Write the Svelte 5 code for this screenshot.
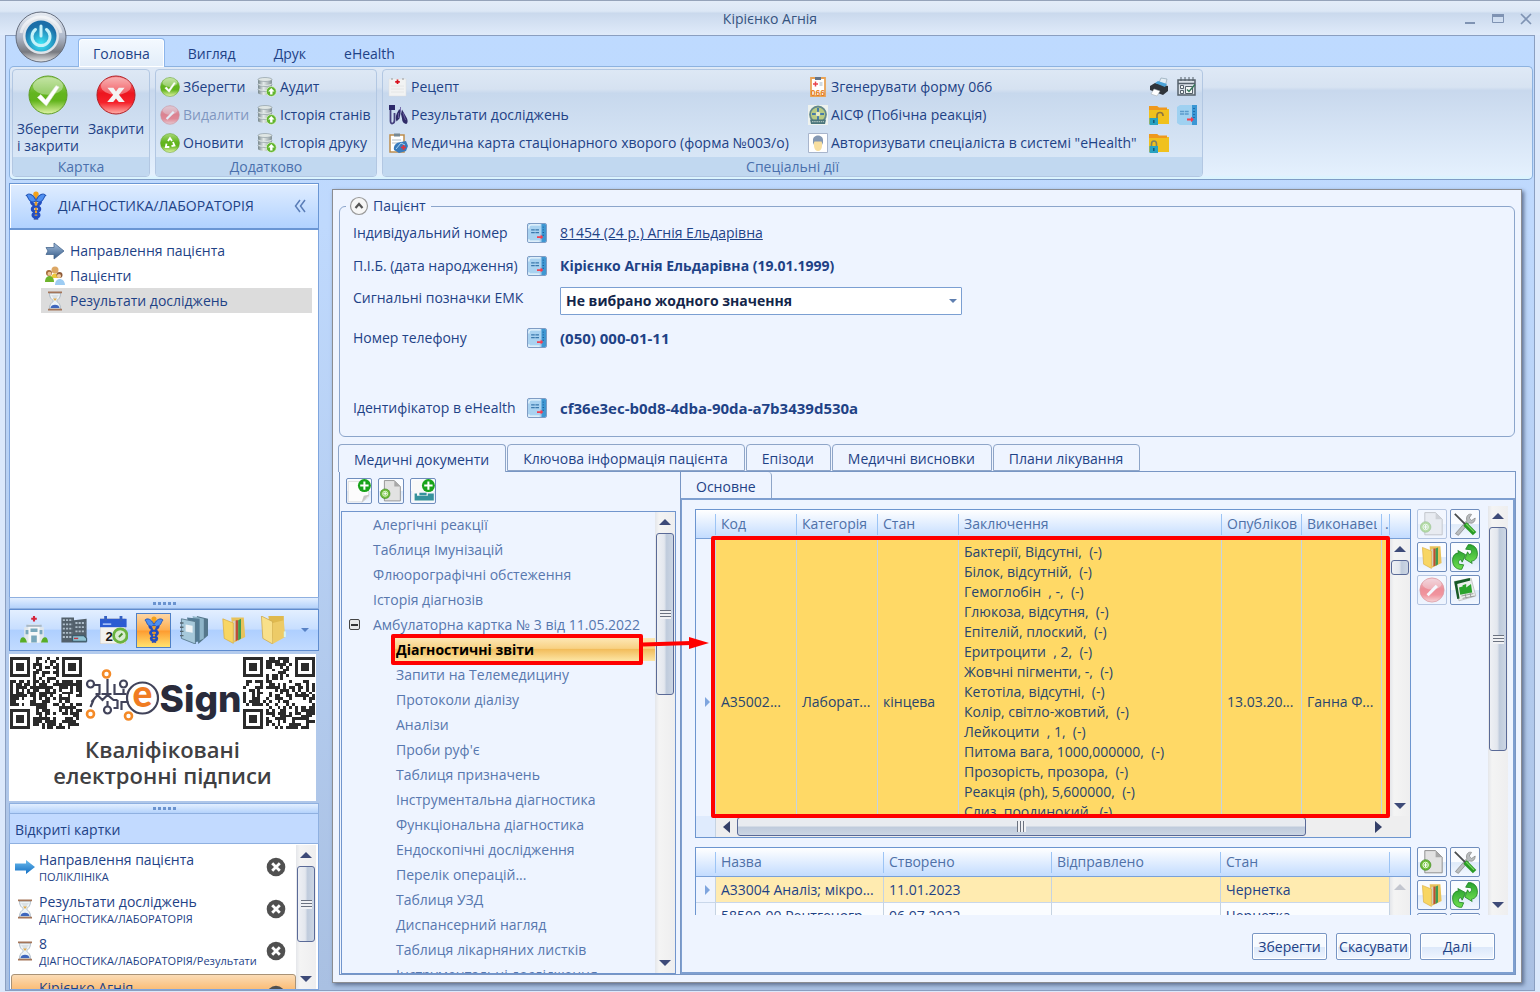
<script lang="ts">
  const tabs = ['Головна', 'Вигляд', 'Друк', 'eHealth'];
  const extra = [
    ['check', 'Зберегти'], ['db', 'Аудит'],
    ['deny', 'Видалити'], ['db', 'Історія станів'],
    ['recycle', 'Оновити'], ['db', 'Історія друку']
  ];
  const special = [
    ['recipe', 'Рецепт'], ['form', 'Згенерувати форму 066'], ['printer', ''], ['schedule', ''],
    ['lungs', 'Результати досліджень'], ['emblem', 'АІСФ (Побічна реакція)'], ['unlock', ''], ['card', ''],
    ['medcard', 'Медична карта стаціонарного хворого (форма №003/о)'], ['person', 'Авторизувати спеціаліста в системі "eHealth"'], ['lock', '']
  ];
  const nav = [['arrow', 'Направлення пацієнта'], ['people', 'Пацієнти'], ['hourglass', 'Результати досліджень']];
  const modules = ['hospital', 'building', 'calendar', 'caduceus', 'books', 'files', 'folder'];
  const cards = [
    ['bluearrow', 'Направлення пацієнта', 'ПОЛІКЛІНІКА'],
    ['hourglass', 'Результати досліджень', 'ДІАГНОСТИКА/ЛАБОРАТОРІЯ'],
    ['hourglass', '8', 'ДІАГНОСТИКА/ЛАБОРАТОРІЯ/Результати досліджень'],
    ['', 'Кірієнко Агнія', '']
  ];
  const docTabs = ['Медичні документи', 'Ключова інформація пацієнта', 'Епізоди', 'Медичні висновки', 'Плани лікування'];
  const rootItems = ['Алергічні реакції', 'Таблиця Імунізацій', 'Флюорографічні обстеження', 'Історія діагнозів'];
  const childItems = ['Діагностичні звіти', 'Запити на Телемедицину', 'Протоколи діалізу', 'Аналізи', "Проби руф'є", 'Таблиця призначень', 'Інструментальна діагностика', 'Функціональна діагностика', 'Ендоскопічні дослідження', 'Перелік операцій...', 'Таблиця УЗД', 'Диспансерний нагляд', 'Таблиця лікарняних листків', 'Інструментальні дослідження'];
  const resultCols = ['', 'Код', 'Категорія', 'Стан', 'Заключення', 'Опубліковано', 'Виконавець', '.'];
  const draftCols = ['', 'Назва', 'Створено', 'Відправлено', 'Стан'];
  const findings = ['Бактерії, Відсутні,  (-)', 'Білок, відсутній,  (-)', 'Гемоглобін  , -,  (-)', 'Глюкоза, відсутня,  (-)', 'Епітелій, плоский,  (-)', 'Еритроцити  , 2,  (-)', 'Жовчні пігменти, -,  (-)', 'Кетотіла, відсутні,  (-)', 'Колір, світло-жовтий,  (-)', 'Лейкоцити  , 1,  (-)', 'Питома вага, 1000,000000,  (-)', 'Прозорість, прозора,  (-)', 'Реакція (ph), 5,600000,  (-)', 'Слиз, поодинокий,  (-)'];

  function qr(seed: number) {
    const n = 25;
    let d = '';
    let s = seed;
    const inside = (x: number, y: number) => (x < 8 && y < 8) || (x > n - 9 && y < 8) || (x < 8 && y > n - 9);
    for (let y = 0; y < n; y++) for (let x = 0; x < n; x++) {
      s = (s * 1103515245 + 12345) % 2147483648;
      if (!inside(x, y) && (s >> 12) % 100 < 55) d += `M${x} ${y}h1v1h-1z`;
    }
    for (const [x, y] of [[0, 0], [n - 7, 0], [0, n - 7]]) {
      d += `M${x} ${y}h7v7h-7zM${x + 1} ${y + 1}v5h5v-5zM${x + 2} ${y + 2}h3v3h-3z`;
    }
    return d;
  }
</script>

{#snippet icon(name: string, size: number = 20)}
  <svg class="ico" width={size} height={size} viewBox="0 0 20 20" aria-hidden="true">
    {#if name === 'check'}
      <circle cx="10" cy="10" r="9.5" fill="url(#gGreen)" stroke="#5d9c25" stroke-width=".5" />
      <ellipse cx="10" cy="5.5" rx="7.5" ry="4.4" fill="#fff" opacity=".35" />
      <path d="M4.7 11.2 6.4 9.8 8.8 12.4 14 5.3 15.6 6 9.2 15.5Z" fill="#fff" stroke="#d9e6cc" stroke-width=".3" />
    {:else if name === 'cross'}
      <circle cx="10" cy="10" r="9.5" fill="url(#gRed)" stroke="#b11c22" stroke-width=".5" />
      <ellipse cx="10" cy="5.5" rx="7.5" ry="4.4" fill="#fff" opacity=".35" />
      <path d="M5.7 6.4h3L10 8.2l1.4-1.8h2.9l-2.8 3.5 2.9 3.6h-3L10 11.7l-1.4 1.8H5.6l3-3.6Z" fill="#f3f3f3" />
    {:else if name === 'deny'}
      <circle cx="10" cy="10" r="9.3" fill="url(#gRed)" stroke="#c73137" stroke-width=".6" />
      <ellipse cx="10" cy="5.5" rx="7.3" ry="4.2" fill="#fff" opacity=".35" />
      <path d="M5.8 13.2 12.9 6l1.7 1.6-7.2 7.2Z" fill="#fff" />
    {:else if name === 'recycle'}
      <circle cx="10" cy="10" r="9.5" fill="url(#gGreen)" stroke="#5d9c25" stroke-width=".5" />
      <path d="M8 8 10 5l2 3M13 9l1.500 3.500-3 .5M9.300 14H5.800L6.500 10.600" fill="none" stroke="#fff" stroke-width="1.800" />
    {:else if name === 'db'}
      {#each [12.5, 7.5, 2.5] as y}
        <path d="M1 {y}v3.300c0 1.300 3 2.200 7 2.200s7-.9 7-2.200V{y}Z" fill="url(#gSteel)" />
        <ellipse cx="8" cy={y} rx="7" ry="2" fill="#dfe6e4" stroke="#84949a" stroke-width=".6" />
      {/each}
      <circle cx="14.300" cy="14.500" r="5" fill="#62b52e" stroke="#e9f5df" stroke-width=".7" />
      <path d="M14.300 11l3.200 3.400h-2v3h-2.400v-3h-2Z" fill="#fff" />
    {:else if name === 'recipe'}
      <path d="M1 2h17v17H1z" fill="#f2f3f3" stroke="#dedede" stroke-width=".5" />
      <path d="M3 9h13M3 12h13M3 15h13" stroke="#e2e2e2" stroke-width=".8" />
      <path d="M4 1v2M15 1v2" stroke="#999" />
      <path d="M9.500 2.500v4.500M7.200 4.800h4.600" stroke="#d8101c" stroke-width="1.700" />
    {:else if name === 'lungs'}
      <path d="M1 0h6v5H1z" fill="#2d2a6a" />
      <path d="M2.500 5v11c0 4 4 3 4-1V8" fill="none" stroke="#46417f" stroke-width="1.800" />
      <path d="M11 4.500 9 8c-1.500 3-1.500 6-.5 8.500l3-3 1-5v-4ZM14 4.500l4.500 8c2 3.500 1 6.500-.5 6.500-2.500-.5-4-2.500-4-5.500l-1-4.500Z" fill="#302c68" />
      <path d="M12.500 2v5m2.500 1 2.500 7M10.500 8v5" stroke="#6c61a5" stroke-width=".9" />
    {:else if name === 'medcard'}
      <path d="M2 2h14v17H2z" fill="#fff" stroke="#bd8d4d" stroke-width="1.500" />
      <path d="M6 .5h6v3H6z" fill="#778892" /><path d="M4 7h9M4 10h6" stroke="#b3bdc5" />
      <path d="M6 17c-1-5 3-8 7-8l5-1 2 5-2 5-7 2Z" fill="#397abb" />
      <path d="m8 16 5-6 4 2" fill="none" stroke="#a8d4f4" /><path d="M15.500 12v5M13 14.500h5" stroke="#e2333d" stroke-width="1.700" />
    {:else if name === 'form'}
      <path d="M3 1h14v18H3z" fill="#fff" stroke="#e9a356" stroke-width="1.800" />
      <path d="M7 0h6v3H7z" fill="#64758a" /><path d="M7.500 4.500v5M5 7h5" stroke="#e9434e" stroke-width="1.500" />
      <path d="M11.500 6h3M11.500 8h3" stroke="#9fb3c4" />
      <text x="2.700" y="18.500" font-size="8.500" font-weight="700" fill="#e47d20" font-family="Liberation Sans">066</text>
    {:else if name === 'emblem'}
      <path d="M0 0h20v20H0z" fill="#eef2ee" />
      <circle cx="10" cy="9.500" r="8" fill="#b9cb84" stroke="#64898c" stroke-width="1.800" />
      <path d="M10 3v12M4 9h12" stroke="#467aa8" stroke-width="2" /><circle cx="10" cy="9" r="2.300" fill="#e9ebc6" />
      <path d="M2 14.500h16l-1 4.500H3Z" fill="#4b757c" /><path d="M4 16.700h12" stroke="#bed1cb" stroke-dasharray="1.500 .7" />
    {:else if name === 'person'}
      <path d="M.5.5h19v19H.5z" fill="#fff" stroke="#a8b5cc" />
      <path d="M6 8h8v5c0 3-2 5-4 5s-4-2-4-5Z" fill="#f8dfa0" /><path d="M5 12V7c0-6 10-6 10 0v5l-1.500-3.500h-7Z" fill="#8498b3" />
    {:else if name === 'printer'}
      <path d="m9 8 3-7 6 1-2 8Z" fill="#e4eef5" stroke="#8298a8" stroke-width=".6" />
      <path d="m1 9 5-3 13 3v5l-5 4-13-5Z" fill="#2f343a" /><path d="m6 6 3-2 9 3-2 3Z" fill="#4ca3d8" />
      <path d="m5 12 6 2-3 5-6-2Z" fill="#fff" stroke="#a1a8ad" stroke-width=".5" />
    {:else if name === 'schedule'}
      <path d="M1 3h17v15H1z" fill="#dbe2e8" stroke="#55616b" stroke-width="1.500" /><path d="M1 6.500h17" stroke="#55616b" stroke-width="1.500" />
      <path d="M4 0v4M8 0v4M12 0v4M16 0v4" stroke="#55616b" />
      <path d="M3.500 8.500h3v3h-3zM3.500 13.500h3v3h-3zM8.500 9.500h7v7h-7z" fill="#f3f7f5" stroke="#55616b" />
      <path d="m10 12.500 2 2 6-7" stroke="#347657" fill="none" stroke-width="1.400" />
    {:else if name === 'unlock' || name === 'lock'}
      <path d="M0 1h8l2 3h10v15H0z" fill="#f0c11d" /><path d="M0 1h8l2 1.500h8V5H0z" fill="#ef991d" />
      {#if name === 'unlock'}
        <path d="M8 13V10.500c0-4 6-4 6 0v.5" fill="none" stroke="#8c7542" stroke-width="1.700" />
      {:else}
        <path d="M2.500 14v-3c0-4 5-4 5 0v3" fill="none" stroke="#7e8362" stroke-width="1.600" />
      {/if}
      <path d="M.500 13h8.500v7H.5z" fill="#28a3c2" /><path d="M4.800 15v3" stroke="#145a76" stroke-width="1.500" />
    {:else if name === 'card'}
      <path d="M0 2 3 0h17v20H3l-3-2Z" fill="#9fd1f1" /><path d="M15 0h5v20h-5z" fill="#3b97d4" />
      <path d="M3 6.500h9M3 9h9" stroke="#5b9bcb" stroke-width="1.300" stroke-dasharray="4 .7" /><path d="M17 3v12" stroke="#195e9c" stroke-dasharray="1 2" stroke-width="1.500" />
      <path d="M10 13.500h4v-1.700l3 2.700-3 2.700v-1.700h-4Z" fill="#f33f50" />
    {:else if name === 'cardbtn'}
      <path d="M0 0h20v20H0z" fill="#a9d2f0" /><path d="M15 0h5v20h-5z" fill="#3f97d2" /><path d="M1 5V2.500L3 1h11M1 17v2h12" fill="none" stroke="#eef7fd" stroke-width="1.300" />
      <path d="M3.500 6.500h9M3.500 9.500h9" stroke="#3a78ac" stroke-width="1.300" stroke-dasharray="4 .7" /><path d="M17 3v12" stroke="#1d5c94" stroke-dasharray="1 2" stroke-width="1.500" />
      <path d="M10 13.500h4v-1.700l3 2.700-3 2.700v-1.700h-4Z" fill="#f33f50" />
    {:else if name === 'caduceus'}
      <path d="M10 1v18" stroke="#e59822" stroke-width="1.600" /><circle cx="10" cy="2.200" r="1.800" fill="#f2a11b" />
      <path d="M9.500 5.500C8.500 2.500 5 1 3.500 3c1.500.5 1 4 4.500 4.500l2-1 2 1C15.500 7 15 3.500 16.500 3 15 1 11.500 2.500 10.500 5.500Z" fill="#4f8ff0" stroke="#1f53b7" stroke-width=".7" />
      <path d="M7 7c-.5 3 5.500 2.500 5.500 5s-4.500 2-4.500 4 3 1 2.500 3M13 7c.5 3-5.500 2.500-5.500 5s4.500 2 4.500 4-3 1-2.500 3" fill="none" stroke="#224dc0" stroke-width="2" />
      <circle cx="10" cy="9" r=".9" fill="#f0a32a" /><circle cx="10" cy="14" r=".8" fill="#f0a32a" />
    {:else if name === 'arrow'}
      <path d="M1 6.500h8V2l10 8-10 8v-4.500H1l2-3.500Z" fill="url(#gArrow)" stroke="#48688f" stroke-width=".8" />
    {:else if name === 'bluearrow'}
      <path d="M0 6.500h11V3l9 7-9 7v-3.500H0Z" fill="url(#gBlue)" />
    {:else if name === 'people'}
      <circle cx="10" cy="4" r="3.500" fill="#dca765" /><path d="M6 12c0-6 8-6 8 0Z" fill="#edc83c" />
      <circle cx="4" cy="7" r="3" fill="#a66c3b" /><circle cx="4.500" cy="7.800" r="2" fill="#eec493" /><path d="M0 16c0-8 9-8 9 0Z" fill="#6eb42c" />
      <circle cx="14.500" cy="9" r="3" fill="#8d5a38" /><circle cx="14" cy="10" r="2.100" fill="#f0c89b" /><path d="M10 19c0-8 9.500-8 10 0Z" fill="#9dccf3" />
    {:else if name === 'hourglass'}
      <path d="M4.500 2h11c0 5-2 6-4 8 2 2 4 3 4 8h-11c0-5 2-6 4-8-2-2-4-3-4-8Z" fill="#edf3f7" stroke="#9eafbd" stroke-width=".8" />
      <path d="M6 4h8l-4 5Z" fill="#dbe1e4" /><path d="M8 7.500h4l-2 2.500Z" fill="#e0ac4f" /><path d="M5.500 17c0-4.500 9-4.500 9 0Z" fill="#3e66bd" />
      <path d="M3 1.300h14M3 18.700h14" stroke="#a47559" stroke-width="1.800" />
    {:else if name === 'hospital'}
      <path d="M3 8h14v11H3z" fill="#dfe6eb" /><path d="M6 6h8v13H6z" fill="#f5f7f8" /><path d="M4.500 7h11" stroke="#a9b9c6" stroke-width="1.500" />
      <path d="M10 0v4M8 2h4" stroke="#d5253b" stroke-width="1.500" /><path d="M4 10h2v3H4zM7.500 9h5v2.500h-5zM14 10h2v3h-2zM8 14h4v5H8z" fill="#78a7bb" />
      <path d="M0 19c0-5 4-5 5 0ZM15 19c1-5 5-5 5 0Z" fill="#58ad27" />
    {:else if name === 'building'}
      <path d="M1 1h9v18H1zM10 3l9-1v17h-9z" fill="#53606b" /><path d="M2 3h7M2 6h7M2 9h7M2 12h7M2 15h7M11 5h7M11 8h7M11 11h7" stroke="#aebdc9" stroke-width="1.300" stroke-dasharray="1.500 .8" />
      <path d="M9 14h8l2 2v2H9z" fill="#8fc3d4" stroke="#3d5b6b" stroke-width=".8" /><path d="M10 16h3" stroke="#bd3943" />
    {:else if name === 'calendar'}
      <path d="M0 2h18v18H0z" fill="#f3f2ee" stroke="#bdc0c5" stroke-width=".6" /><path d="M0 2h19v6H0z" fill="#2b5bd2" />
      <path d="M4 0v4M15 0v4" stroke="#345fc2" stroke-width="2" /><path d="M2 5.800h6" stroke="#bed2ff" />
      <text x="4" y="17.500" font-size="9.500" font-weight="700" fill="#191919" font-family="Liberation Sans">2</text>
      <circle cx="14.500" cy="14" r="4.800" fill="#d9ecd0" stroke="#6ab33e" stroke-width="2" /><path d="m13.500 15 2.500-2.500" stroke="#4a902a" stroke-width="1.300" />
    {:else if name === 'books'}
      <path d="m12 0 8 2v12l-7 6Z" fill="#55778b" /><path d="m9 0 8 2v14l-6 3Z" fill="#8fb5c8" /><path d="m5 1 9 1v16l-5 1Z" fill="#537b94" /><path d="m1 2 10 2v16L1 16Z" fill="#a6c8da" stroke="#527388" stroke-width=".6" />
      <path d="m4 6 5 1v5l-5-1Z" fill="#eef4f7" /><path d="M0 5h2.500M0 8h2.500M0 11h2.500M0 14h2.500" stroke="#56666f" />
    {:else if name === 'files'}
      <path d="m8 1 9 0 1 14-8 4Z" fill="#e8c25a" /><path d="m9 4 2.200-1v14L9 18z" fill="#d7cfb9" /><path d="m11.200 3 1.800 0v14l-1.800 1z" fill="#bd4d38" /><path d="m13 3 2-1v14l-2 1.500z" fill="#3f9b52" /><path d="m2 2 7.500 3v14.500L3 16Z" fill="#f8d663" stroke="#d8aa3c" stroke-width=".5" />
    {:else if name === 'folder'}
      <path d="M6 0h11v14l-9 2Z" fill="#dfb94e" /><path d="m1 0 8 4v16l-7-4Z" fill="#f8e08a" stroke="#c9a445" stroke-width=".5" /><path d="m9 5 8-2 1 12-9 5Z" fill="#edcb67" /><path d="M17 11h1.500v4H17z" fill="#d8f3ed" />
    {:else if name === 'closegray'}
      <circle cx="10" cy="10" r="9.300" fill="#505050" /><path d="m6.200 6.200 7.600 7.600m0-7.600-7.600 7.600" stroke="#fff" stroke-width="2.800" />
    {:else if name === 'newdoc'}
      <path d="M1 2h17v13l-5 4H1z" fill="#fcfcfc" stroke="#d3d3d3" stroke-width=".6" /><path d="m12 20 2-6 5-1Z" fill="#c5c5c5" />
      <circle cx="14.500" cy="5.500" r="5.400" fill="#18a31a" /><path d="M14.500 2v7M11 5.500h7" stroke="#fff" stroke-width="1.700" />
    {:else if name === 'bed'}
      <path d="M1 1h18v18H1z" fill="#f8f8f8" /><path d="M3 12h2v2h14v4H3Zm4-.5h6v2H7Zm7 .5h5v2h-5Z" fill="#36929c" />
      <circle cx="14.500" cy="5.500" r="5.400" fill="#18a31a" /><path d="M14.500 2v7M11 5.500h7" stroke="#fff" stroke-width="1.700" />
    {:else if name === 'addpage'}
      <path d="M4 .5h9l5.500 5.500v13H4z" fill="#e2e2e2" stroke="#8e8e8e" stroke-width=".8" /><path d="M13 .500v5.500h5.500Z" fill="#a8a8a8" />
      <circle cx="4.700" cy="12.500" r="4.400" fill="#6fbd3a" stroke="#368118" stroke-width=".5" /><circle cx="4.700" cy="12.500" r="2.300" fill="none" stroke="#edffe1" stroke-width=".8" /><path d="M4.700 10.800v3.400M3 12.500h3.400" stroke="#fff" />
    {:else if name === 'tools'}
      <path d="m2 18 9.500-11c-1-3 1-6 4-5l-2 3 2 2 3-2c0 4-3 5-5 4L4.500 19.500Z" fill="#b9bdbf" stroke="#777" stroke-width=".5" />
      <path d="m1.500 1.500 9 9" stroke="#484c4d" stroke-width="1.500" /><path d="m10 10 8 8" stroke="#299b25" stroke-width="4" /><path d="m11 10 6.500 6.500" stroke="#77d560" />
    {:else if name === 'refresh'}
      <path d="M.8 15C-.5 10 2 7 5 6.800L4.500 5 10.500 8.200 7.800 14 7 12c-2 .3-2.600 2-1.400 3.600L9 16l-1.500 3.500C4.500 19.800 1.600 18 .8 15Z" fill="url(#gRefresh)" stroke="#1b7e20" stroke-width=".6" />
      <path d="M19.200 5C20.500 10 18 13 15 13.200l.5 1.800L9.800 11.500 12 6l1 2c2-.3 2.600-2 1.400-3.600L10.500 4 12.500.5C15.500.2 18.400 2 19.200 5Z" fill="url(#gRefresh)" stroke="#1b7e20" stroke-width=".6" />
    {:else if name === 'chart'}
      <path d="m1 3 14-3 4 15-14 4Z" fill="#ecefed" stroke="#aaa" stroke-width=".5" /><path d="m1 3 13-3 .5 2-11 3 2 12-2 .5Z" fill="#175a26" />
      <path d="m5 8 3-1v-1l3-1v3l4-3 1 7-10 2Z" fill="#2aa42c" /><path d="m7 15 10-2M8 17l10-2M10 13l1 4M14 12l1 4" stroke="#8c918d" stroke-width=".7" />
    {/if}
  </svg>
{/snippet}

{#snippet vbar(thumb: string)}
  <div class="vbar" aria-hidden="true">
    <i class="up"></i>
    <div class="track"><div class="thumb {thumb}"><b></b></div></div>
    <i class="down"></i>
  </div>
{/snippet}

{#snippet toolset(first: boolean)}
  <div class="toolset">
    <button class="sq" class:off={first} disabled={first} aria-label="Додати">{@render icon('addpage', 24)}</button>
    <button class="sq" aria-label="Налаштувати">{@render icon('tools', 24)}</button>
    <button class="sq" aria-label="Відкрити">{@render icon('files', 24)}</button>
    <button class="sq" aria-label="Оновити">{@render icon('refresh', 26)}</button>
    <button class="sq" class:off={first} disabled={first} aria-label="Видалити">{@render icon('deny', 26)}</button>
    <button class="sq" aria-label="Звіт">{@render icon('chart', 24)}</button>
  </div>
{/snippet}

<svg class="defs" aria-hidden="true">
  <defs>
    <linearGradient id="gGreen" x2="0" y2="1"><stop stop-color="#a8d878" /><stop offset=".45" stop-color="#63b51f" /><stop offset=".65" stop-color="#62b41d" /><stop offset="1" stop-color="#e3f5a8" /></linearGradient>
    <linearGradient id="gRed" x2="0" y2="1"><stop stop-color="#f58e90" /><stop offset=".45" stop-color="#ec151e" /><stop offset=".7" stop-color="#f5222b" /><stop offset="1" stop-color="#ffb4ad" /></linearGradient>
    <linearGradient id="gSteel"><stop stop-color="#77878b" /><stop offset=".4" stop-color="#e4eae9" /><stop offset="1" stop-color="#839195" /></linearGradient>
    <linearGradient id="gArrow" x2="0" y2="1"><stop stop-color="#a5bfdd" /><stop offset="1" stop-color="#335986" /></linearGradient>
    <linearGradient id="gBlue" x2="0" y2="1"><stop stop-color="#6cbbec" /><stop offset="1" stop-color="#126fc4" /></linearGradient>
    <linearGradient id="gRefresh" x2="0" y2="1"><stop stop-color="#2aa331" /><stop offset="1" stop-color="#6fdf50" /></linearGradient>
    <linearGradient id="gOrb" x2="0" y2="1"><stop stop-color="#e8edf4" /><stop offset=".5" stop-color="#aeb8ca" /><stop offset=".8" stop-color="#77797f" /><stop offset="1" stop-color="#e9eaec" /></linearGradient>
    <radialGradient id="gCore" cy=".75" r=".6"><stop stop-color="#3ce8f8" /><stop offset="1" stop-color="#1b6ea8" /></radialGradient>
  </defs>
</svg>

<div class="window">
  <header class="title">
    <h1>Кірієнко Агнія</h1>
    <div class="winbtns">
      <button aria-label="Згорнути"><svg width="12" height="12"><path d="M1 10h10" stroke="#7f93b3" stroke-width="2" /></svg></button>
      <button aria-label="Розгорнути"><svg width="12" height="12"><path d="M.5 1.500h11v8H.5z" fill="none" stroke="#7f93b3" /><path d="M0 2.500h12" stroke="#7f93b3" stroke-width="3" /></svg></button>
      <button aria-label="Закрити вікно"><svg width="12" height="12"><path d="m1 1 10 10m0-10L1 11" stroke="#7f93b3" stroke-width="1.600" /></svg></button>
    </div>
  </header>
  <button class="orb" aria-label="Меню">
    <svg width="52" height="52" viewBox="0 0 52 52">
      <circle cx="26" cy="26" r="25" fill="url(#gOrb)" stroke="#666e7e" /><circle cx="26" cy="25" r="18" fill="#dfe4ea" /><circle cx="26" cy="25" r="15.500" fill="url(#gCore)" />
      <path d="M20.500 18.500a9 9 0 1 0 11 0M26 15v10" fill="none" stroke="#c5f2fa" stroke-width="3" stroke-linecap="round" />
      <path d="M6 22a20.500 20.500 0 0 1 40 0" fill="none" stroke="#fff" stroke-width="3" opacity=".6" />
    </svg>
  </button>

  <div class="frame">
    <nav class="menu">
      {#each tabs as t, i}<button class:active={i === 0}>{t}</button>{/each}
    </nav>

    <section class="ribbon">
      <div class="group">
        <div class="bigs">
          <button>{@render icon('check', 40)}<span>Зберегти<br />і закрити</span></button>
          <button>{@render icon('cross', 40)}<span>Закрити</span></button>
        </div>
        <h2>Картка</h2>
      </div>
      <div class="group">
        <div class="cmds extra">
          {#each extra as [ic, label]}
            <button class:dim={ic === 'deny'} disabled={ic === 'deny'}>{@render icon(ic, 20)}<span>{label}</span></button>
          {/each}
        </div>
        <h2>Додатково</h2>
      </div>
      <div class="group">
        <div class="cmds special">
          {#each special as [ic, label]}
            <button aria-label={label || ic}>{@render icon(ic, 20)}{#if label}<span>{label}</span>{/if}</button>
          {/each}
        </div>
        <h2>Спеціальні дії</h2>
      </div>
    </section>

    <div class="body">
      <aside>
        <div class="sidehead">
          {@render icon('caduceus', 30)}<h2>ДІАГНОСТИКА/ЛАБОРАТОРІЯ</h2>
          <button aria-label="Згорнути панель"><svg width="12" height="14"><path d="M6 1 1.500 7 6 13M11 1 6.500 7l4.500 6" fill="none" stroke="#5a7db8" stroke-width="1.500" /></svg></button>
        </div>
        <ul class="nav">
          {#each nav as [ic, label], i}
            <li><button class:on={i === 2}>{@render icon(ic, 20)}{label}</button></li>
          {/each}
        </ul>
        <div class="split"><i></i></div>
        <div class="modules">
          {#each modules as m}<button class:on={m === 'caduceus'} aria-label={m}>{@render icon(m, 28)}</button>{/each}
          <i class="more"></i>
        </div>
        <div class="banner">
          <div class="brand">
            <svg width="72" height="72" viewBox="0 0 25 25"><path d={qr(7)} fill="#2b2b2b" fill-rule="evenodd" shape-rendering="crispEdges" /></svg>
            <svg width="158" height="72" viewBox="0 0 158 72">
              <g fill="none" stroke="#41435a" stroke-width="2.200">
                <circle cx="7" cy="27" r="3.500" /><circle cx="40" cy="27" r="3.500" /><circle cx="24" cy="53" r="3.500" />
                <path d="M10 28h6v9h-4M24 22v16M18 37h10M31 27v10h12M40 32v5M10 43l-3 7M8 45l6-7 5 5 5-5 6 5h4M24 49v-5M34 43v8h-4M38 53v-8h7" />
                <circle cx="59" cy="41" r="15.500" />
              </g>
              <g fill="none" stroke="#f48a27" stroke-width="2.600"><circle cx="23" cy="17" r="3.500" /><circle cx="7" cy="57" r="3.500" /><circle cx="45" cy="59" r="3.500" /></g>
              <text x="49" y="50" font-family="Lato" font-weight="900" font-size="37" fill="#f07c22">e</text>
              <text x="76" y="55" font-family="Inter" font-weight="800" font-size="37" fill="#292b3b">Sign</text>
            </svg>
            <svg width="72" height="72" viewBox="0 0 25 25"><path d={qr(4219)} fill="#2b2b2b" fill-rule="evenodd" shape-rendering="crispEdges" /></svg>
          </div>
          <p>Кваліфіковані<br />електронні підписи</p>
        </div>
        <div class="split low"><i></i></div>
        <h2 class="openhead">Відкриті картки</h2>
        <div class="open">
          <ul>
            {#each cards as [ic, name, sub], i}
              <li class:on={i === 3}>
                {@render icon(ic, 20)}
                <div><strong>{name}</strong><small>{sub}</small></div>
                <button aria-label="Закрити {name}">{@render icon('closegray', 20)}</button>
              </li>
            {/each}
          </ul>
          {@render vbar('t-open')}
        </div>
      </aside>

      <main>
        <fieldset>
          <legend><svg width="20" height="20"><circle cx="10" cy="10" r="8.500" fill="#f6f6f6" stroke="#999" stroke-width="1.200" /><path d="m6.500 12 3.500-4 3.500 4" fill="none" stroke="#555" stroke-width="2.200" /></svg>Пацієнт</legend>
          <div class="row r1"><span>Індивідуальний номер</span><button class="mini" aria-label="Номер">{@render icon('cardbtn', 18)}</button><a href="#patient">81454 (24 р.) Агнія Ельдарівна</a></div>
          <div class="row r2"><span>П.І.Б. (дата народження)</span><button class="mini" aria-label="ПІБ">{@render icon('cardbtn', 18)}</button><b>Кірієнко Агнія Ельдарівна (19.01.1999)</b></div>
          <div class="row r3"><label for="marks">Сигнальні позначки ЕМК</label><i></i><div class="sel"><select id="marks"><option>Не вибрано жодного значення</option></select></div></div>
          <div class="row r4"><span>Номер телефону</span><button class="mini" aria-label="Телефон">{@render icon('cardbtn', 18)}</button><b class="num">(050) 000-01-11</b></div>
          <div class="row r5"><span>Ідентифікатор в eHealth</span><button class="mini" aria-label="Ідентифікатор">{@render icon('cardbtn', 18)}</button><b class="num">cf36e3ec-b0d8-4dba-90da-a7b3439d530a</b></div>
        </fieldset>

        <div class="doctabs">
          {#each docTabs as t, i}<button class:active={i === 0}>{t}</button>{/each}
        </div>
        <div class="docs">
          <div class="left">
            <div class="bar">
              <button class="sq" aria-label="Новий">{@render icon('newdoc', 24)}</button>
              <button class="sq" aria-label="Додати сторінку">{@render icon('addpage', 22)}</button>
              <button class="sq" aria-label="Стаціонар">{@render icon('bed', 24)}</button>
            </div>
            <div class="tree">
              <ul>
                {#each rootItems as t}<li>{t}</li>{/each}
                <li class="parent"><button aria-label="Згорнути гілку"></button>Амбулаторна картка № 3 від 11.05.2022</li>
                {#each childItems as t, i}
                  <li class="child" class:on={i === 0}>{t}{#if i === 0}<i class="mark"></i>{/if}</li>
                {/each}
              </ul>
              {@render vbar('t-tree')}
            </div>
          </div>
          <svg class="pointer" width="68" height="14" aria-hidden="true"><path d="M0 8.500 48 7" stroke="#f00" stroke-width="4" /><path d="M46 1v12l20-6Z" fill="#f00" /></svg>
          <div class="right">
            <div class="subtabs"><button>Основне</button></div>
            <div class="sub">
              <div class="scroll">
                <div class="blocks">
                  <div class="block">
                    <div class="grid">
                      <div class="view">
                        <table>
                          <colgroup><col class="c20" /><col class="c81" /><col class="c81" /><col class="c81" /><col /><col class="c80" /><col class="c80" /><col class="c8" /></colgroup>
                          <thead><tr>{#each resultCols as c}<th><span>{c}</span></th>{/each}</tr></thead>
                          <tbody><tr class="result"><td><i class="cur"></i></td><td>A35002...</td><td>Лаборат...</td><td>кінцева</td>
                            <td class="find">{#each findings as f}<div>{f}</div>{/each}</td><td>13.03.20...</td><td>Ганна Ф...</td><td></td></tr></tbody>
                        </table>
                        <div class="side"><div class="cap"></div>{@render vbar('t-grid')}</div>
                      </div>
                      <div class="hbar" aria-hidden="true"><i class="stub"></i><i class="lt"></i><div class="track"><div class="thumb"><b></b></div></div><i class="rt"></i></div>
                      <i class="frameMark"></i>
                    </div>
                    {@render toolset(true)}
                  </div>
                  <div class="block">
                    <div class="grid second">
                      <div class="view">
                        <table>
                          <colgroup><col class="c20" /><col class="c168" /><col class="c168" /><col class="c169" /><col /></colgroup>
                          <thead><tr>{#each draftCols as c}<th><span>{c}</span></th>{/each}</tr></thead>
                          <tbody>
                            <tr class="draft hot"><td><i class="cur"></i></td><td>A33004 Аналіз; мікро...</td><td>11.01.2023</td><td></td><td>Чернетка</td></tr>
                            <tr class="draft"><td></td><td>58500-00 Рентгеногр...</td><td>06.07.2022</td><td></td><td>Чернетка</td></tr>
                          </tbody>
                        </table>
                        <div class="side"><div class="cap"></div><div class="vbar faint"><i class="up"></i></div></div>
                      </div>
                    </div>
                    {@render toolset(false)}
                  </div>
                </div>
                {@render vbar('t-main')}
              </div>
              <footer><button>Зберегти</button><button>Скасувати</button><button>Далі</button></footer>
            </div>
          </div>
        </div>
      </main>
    </div>
  </div>
</div>

<style>
  :global(body) { margin: 0; }
  .window, .window * { box-sizing: border-box; }
  .window { position: relative; height: 100vh; min-height: 900px; display: flex; flex-direction: column; overflow: hidden; background: #dbe8fb; color: #1e4286; font: 14px/20px "Open Sans", "Noto Sans", sans-serif; }
  .defs { position: absolute; width: 0; height: 0; }
  button { font: inherit; color: inherit; border: 0; background: none; padding: 0; margin: 0; white-space: nowrap; }
  h1, h2, p, ul { margin: 0; padding: 0; font: inherit; list-style: none; }
  svg { display: block; flex: none; }

  .title { flex: none; height: 35px; border-top: 1px solid #95a3b9; background: linear-gradient(#e3ecf8, #dce7f5 30%, #cad9ed 36%, #e0ebfa); display: grid; grid-template-columns: 1fr auto 1fr; align-items: center; padding: 2px 8px 0; }
  .title h1 { grid-column: 2; color: #35537f; }
  .winbtns { display: flex; justify-content: flex-end; gap: 16px; }
  .orb { position: absolute; left: 15px; top: 11px; z-index: 3; }

  .frame { flex: 1; min-height: 0; margin: 0 5px 1px; border: 1px solid #8b9fc0; background: linear-gradient(#bedaff 0, #bfd9fd 20%, #a9c0e2); display: flex; flex-direction: column; }
  .menu { flex: none; height: 30px; padding: 2px 0 0 72px; display: flex; gap: 8px; }
  .menu button { padding: 1px 14px 0; border: 1px solid transparent; border-bottom: 0; height: 29px; position: relative; z-index: 1; }
  .menu .active { border-color: #8db5ea; border-radius: 4px 4px 0 0; background: linear-gradient(#f4f9ff, #e2edf9); box-shadow: inset 0 0 0 1px #fff; }

  .ribbon { flex: none; margin: 0 1px 1px 3px; height: 114px; border: 1px solid #8db2df; border-bottom-color: #7f9cc6; border-radius: 5px; padding: 2px; display: flex; gap: 5px; background: linear-gradient(#dfe9f6, #d7e3f2 18%, #c8d8ed 21%, #e4f0fd 96%, #d8f5ff); }
  .group { border: 1px solid #b2c7e2; border-radius: 4px; display: flex; flex-direction: column; overflow: hidden; background: linear-gradient(#dde8f5, #d6e2f1 18%, #c7d8ed 22%, #deebf9); }
  .group h2 { height: 19px; line-height: 19px; background: #c1d8f0; text-align: center; color: #4a70ad; }
  .bigs { flex: 1; display: flex; padding: 5px 0 0 2px; gap: 2px; line-height: 17px; }
  .bigs button { width: 66px; display: flex; flex-direction: column; align-items: center; justify-content: flex-start; gap: 5px; }
  .cmds { flex: 1; display: grid; grid-auto-rows: 28px; padding: 3px 4px 0; }
  .extra { grid-template-columns: 97px 115px; }
  .special { grid-template-columns: 420px 341px 28px 22px; padding: 3px 3px 0 5px; }
  .cmds button { display: flex; align-items: center; gap: 3px; text-align: left; }
  .dim { opacity: .45; }

  .body { flex: 1; min-height: 0; display: flex; gap: 13px; padding: 1px 12px 0 3px; }
  aside { width: 310px; flex: none; display: flex; flex-direction: column; min-height: 0; padding-top: 1px; }
  .sidehead { flex: none; height: 47px; border: 1px solid #6a96d4; border-bottom-width: 2px; background: linear-gradient(#e0edff, #b1d2ff); box-shadow: inset 1px 1px 0 #fff; display: flex; align-items: center; padding: 0 12px 0 11px; gap: 7px; }
  .sidehead h2 { flex: 1; white-space: nowrap; }
  .nav { flex: 1; min-height: 0; background: #fff; border: solid #7fa5de; border-width: 0 1px; padding: 8px 6px 0 31px; }
  .nav button { width: 100%; height: 25px; display: flex; align-items: center; gap: 5px; padding-left: 4px; }
  .nav .on { background: #dcdcdc; }
  .split { flex: none; height: 12px; background: linear-gradient(#e3efff, #b4d2fb); border: 1px solid #8fb0e0; display: grid; place-items: center; }
  .split i { width: 23px; height: 3px; background: repeating-linear-gradient(90deg, #6a93cf 0 3px, transparent 3px 5px); }
  .split.low { height: 11px; margin-top: 2px; }
  .modules { flex: none; height: 42px; border: 1px solid #5f8ccf; background: linear-gradient(#e3efff, #c7deff 48%, #aecfff 50%, #c2dbff); display: flex; align-items: center; gap: 5px; padding-left: 6px; }
  .modules button { width: 35px; height: 35px; display: grid; place-items: center; }
  .modules .on { background: linear-gradient(#fdd6a4, #fdae50 48%, #fd9c31 52%, #ffe36f); border: 1px solid #4f80c6; }
  .more { margin-left: 5px; border: solid transparent; border-width: 4px 4px 0; border-top-color: #5882c5; }
  .banner { flex: none; height: 147px; margin: 3px 3px 0 0; background: #fff; padding: 3px 1px; }
  .brand { display: flex; justify-content: space-between; }
  .brand svg:nth-child(2) { flex: 1; min-width: 0; }
  .banner p { text-align: center; color: #404042; font-size: 22px; font-weight: 600; line-height: 26px; padding-top: 7px; }
  .openhead { flex: none; height: 30px; background: #c2daff; border: 1px solid #8fb0e0; border-top: 0; padding: 6px 5px 0; }
  .open { flex: none; height: 146px; background: #fff; border: solid #7fa5de; border-width: 0 1px 1px; display: flex; padding: 1px 2px 0 1px; overflow: hidden; }
  .open ul { flex: 1; min-width: 0; overflow: hidden; padding-top: 1px; }
  .open li { height: 42px; display: flex; align-items: center; padding: 0 10px 0 4px; gap: 4px; border-radius: 3px; }
  .open li > div { flex: 1; min-width: 0; margin-right: 4px; overflow: hidden; display: flex; flex-direction: column; }
  .open strong { font-weight: 400; line-height: 19px; }
  .open small { font-size: 11px; line-height: 16px; min-height: 16px; white-space: nowrap; }
  .open li.on { border: 1px solid #a99276; padding: 0 9px 0 3px; background: linear-gradient(#fbdcb6, #fbb96f 40%); margin-top: 2px; }

  .vbar { width: 20px; flex: none; align-self: stretch; display: flex; flex-direction: column; align-items: center; background: linear-gradient(90deg, #e4e6ea, #f4f4f4 20%, #eeeeef); padding: 7px 0; }
  .up, .down { border: solid transparent; width: 0; height: 0; flex: none; }
  .up { border-width: 0 6px 6px; border-bottom-color: #3d4a78; }
  .down { border-width: 6px 6px 0; border-top-color: #3d4a78; }
  .track { flex: 1; width: 100%; min-height: 0; padding: 8px 1px 6px; }
  .thumb { border: 1px solid #5a6a97; border-radius: 3px; background: linear-gradient(90deg, #eef0f4, #e3e7ee 45%, #bfcbdc 60%, #ccd6e4); display: grid; place-items: center; }
  .thumb b { width: 11px; height: 9px; background: repeating-linear-gradient(#6b7280 0 1px, #f0f1f4 1px 3px); }
  .t-open { height: 76px; }
  .t-tree { height: 162px; }
  .t-grid { height: 15px; }
  .t-grid b { display: none; }
  .t-main { height: 224px; }
  .faint .up { border-bottom-color: #c3c6cf; }

  main { flex: 1; min-width: 0; display: flex; flex-direction: column; margin: 7px 0 7px; background: #eef4ff; border: 1px solid #8b8d92; box-shadow: 2px 2px 4px #5d6f8f; padding: 6px 6px 7px; }
  fieldset { flex: none; margin: 0; min-width: 0; border: 1px solid #8ba5cb; border-radius: 6px; padding: 0 8px 10px 6px; }
  legend { display: flex; align-items: center; gap: 4px; padding: 0 5px 0 3px; height: 20px; }
  .row { display: grid; grid-template-columns: 174px 33px 1fr; align-items: center; padding-left: 7px; }
  .r1 { height: 34px; } .r2 { height: 32px; } .r3 { height: 38px; } .r4 { height: 36px; } .r5 { height: 36px; margin-top: 34px; }
  .row a { color: inherit; }
  .row b { font-weight: 700; }
  .row b.num { font-size: 15px; }
  .row label { align-self: start; padding-top: 6px; }
  .mini { width: 20px; height: 20px; border: 1px solid #7f9cc4; border-radius: 2px; overflow: hidden; }
  .sel { position: relative; width: 402px; }
  .sel::after { content: ""; position: absolute; right: 5px; top: 12px; border: solid transparent; border-width: 4px 4px 0; border-top-color: #5f7fb0; }
  select { appearance: none; width: 100%; height: 28px; border: 1px solid #7b9fd2; border-radius: 1px; background: #fff; padding: 0 5px; font: inherit; font-weight: 700; color: #14264a; }

  .doctabs { flex: none; display: flex; gap: 1px; margin: 7px 0 -1px -1px; height: 28px; position: relative; z-index: 1; align-items: flex-start; }
  .doctabs button { height: 27px; padding: 2px 16px 0 15px; border: 1px solid #8ea5c8; border-radius: 4px 4px 0 0; background: #eef4ff; }
  .doctabs .active { height: 28px; border-bottom: 0; }
  .docs { flex: 1; min-height: 0; position: relative; display: flex; margin-right: -1px; border: 1px solid #7896c4; }
  .left { width: 336px; flex: none; display: flex; flex-direction: column; min-height: 0; padding: 6px 0 0 1px; }
  .bar { display: flex; gap: 6px; padding: 0 5px 7px; }
  .bar .sq { width: 26px; height: 26px; }
  .sq { display: grid; place-items: center; width: 30px; height: 30px; border: 1px solid #6f8dbd; border-radius: 2px; background: linear-gradient(#fafcff 50%, #dfebfa 52%, #f2f7ff); overflow: hidden; }
  .sq.off { opacity: .45; }
  .tree { flex: 1; min-height: 0; overflow: hidden; display: flex; border: 1px solid #7195cd; color: #5777ae; }
  .tree ul { flex: 1; min-width: 0; }
  .tree li { height: 25px; line-height: 25px; padding-left: 31px; white-space: nowrap; position: relative; }
  .tree .parent { display: flex; align-items: center; gap: 13px; padding-left: 7px; }
  .parent button { width: 11px; height: 11px; border: 1px solid #444; border-radius: 2px; background: linear-gradient(#333, #333) center / 7px 2px no-repeat #e8e8e8; }
  .tree .child { padding-left: 2px; margin-left: 52px; }
  .tree .on { font-weight: 700; color: #000; background: linear-gradient(#fde7b5, #f8d183 45%, #f2bd5c 50%, #fde6a6) 0 1px / 100% 23px no-repeat; }
  .mark { position: absolute; left: -3px; top: -3px; right: 12px; height: 31px; border: 4px solid #f00; border-radius: 2px; }
  .pointer { position: absolute; left: 303px; top: 164px; z-index: 2; }

  .right { flex: 1; min-width: 0; margin-left: 4px; display: flex; flex-direction: column; min-height: 0; border-left: 1px solid #7896c4; }
  .subtabs { flex: none; height: 26px; }
  .subtabs button { height: 26px; padding: 4px 15px 0; border: 1px solid #8ea5c8; border-width: 0 1px 0 0; border-radius: 0 4px 0 0; }
  .sub { flex: 1; min-height: 0; border: 2px solid #7e9fd0; border-left-width: 1px; padding: 6px 5px 0 13px; display: flex; flex-direction: column; }
  .scroll { flex: 1; min-height: 0; overflow: hidden; display: flex; gap: 8px; }
  .blocks { flex: 1; min-width: 0; padding-top: 3px; display: flex; flex-direction: column; gap: 9px; }
  .block { display: flex; gap: 6px; align-items: flex-start; flex: none; }
  .toolset { display: grid; grid-template-columns: 30px 30px; gap: 3px; }
  .grid { flex: 1; min-width: 0; position: relative; border: 1px solid #6c95cf; }
  .view { height: 306px; overflow: hidden; display: flex; align-items: flex-start; }
  .second .view { height: 110px; }
  table { flex: 1; width: 0; min-width: 0; table-layout: fixed; border-collapse: separate; border-spacing: 0; }
  .c20 { width: 20px; } .c81 { width: 81px; } .c80 { width: 80px; } .c8 { width: 8px; } .c168 { width: 168px; } .c169 { width: 169px; }
  th { height: 29px; padding: 0 5px; text-align: left; font-weight: 400; color: #4f71a8; background: linear-gradient(90deg, transparent calc(100% - 1px), #9cc4f5 0) 0 4px / 100% 21px no-repeat, linear-gradient(#fff, #c3dcff); border-bottom: 1px solid #79a0d8; }
  th span { display: block; overflow: hidden; white-space: nowrap; }
  th:last-child { padding: 0 1px 0 3px; }
  .second th:last-child { padding-left: 5px; }
  td { padding: 0 0 0 5px; border-right: 1px solid #c5d3e2; white-space: nowrap; overflow: hidden; }
  td:first-child { background: #eef4ff; padding-left: 9px; }
  .result { height: 326px; background: #ffd966; color: #27456f; }
  .find { vertical-align: top; padding-top: 3px; white-space: pre; }
  .draft td { height: 26px; border-bottom: 1px solid #c9d7ea; }
  .draft { background: #fafcff; }
  .hot { background: #ffebb0; }
  .cur { display: block; width: 0; border: solid transparent; border-width: 5px 0 5px 5px; border-left-color: #7fa5de; }
  .side { width: 20px; align-self: stretch; display: flex; flex-direction: column; align-items: center; }
  .side .vbar { flex: 1; }
  .cap { width: 100%; height: 29px; flex: none; background: linear-gradient(#fff, #c3dcff); border-bottom: 1px solid #79a0d8; }
  .hbar { height: 21px; display: flex; align-items: center; background: #eeeeef; padding-right: 28px; }
  .stub { width: 20px; align-self: stretch; background: #dfebfd; border-right: 1px solid #c5d3e2; margin-right: 7px; }
  .lt, .rt { border: solid transparent; }
  .lt { border-width: 6px 7px 6px 0; border-right-color: #333f68; }
  .rt { border-width: 6px 0 6px 7px; border-left-color: #333f68; }
  .hbar .track { padding: 0 6px 0 7px; }
  .hbar .thumb { width: 90%; height: 19px; background: linear-gradient(#e8ebf0 45%, #bfcbdc 55%, #ccd6e4); }
  .hbar .thumb b { width: 9px; height: 11px; background: repeating-linear-gradient(90deg, #6b7280 0 1px, #f0f1f4 1px 3px); }
  .frameMark { position: absolute; left: 15px; top: 26px; right: 20px; bottom: 19px; border: 4px solid #f00; border-radius: 2px; pointer-events: none; }
  footer { flex: none; display: flex; justify-content: flex-end; gap: 9px; padding: 18px 13px 12px 0; }
  footer button { width: 75px; height: 27px; border: 1px solid #7896c4; border-radius: 2px; background: linear-gradient(#f6faff 50%, #dde9fa 54%, #eff5ff); box-shadow: inset 0 0 0 1px #fff; overflow: hidden; }
</style>
